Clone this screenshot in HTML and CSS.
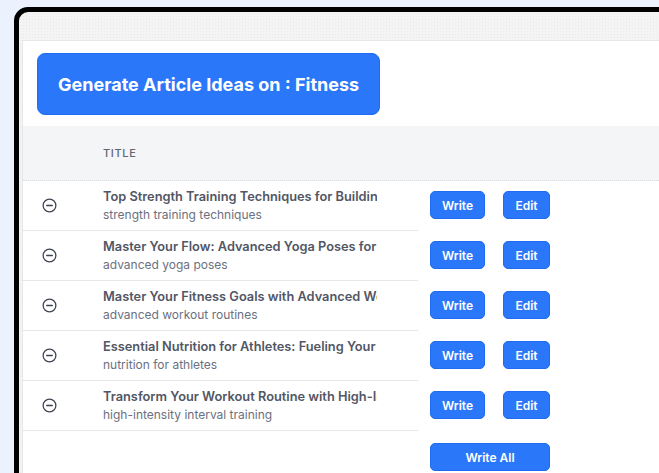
FILE: index.html
```html
<!DOCTYPE html>
<html>
<head>
<meta charset="utf-8">
<link rel="stylesheet" href="styles.css">
</head>
<body>
<div class="frame">
  <div class="panel">
    <div class="top">
      <button class="gen">Generate Article Ideas on : Fitness</button>
    </div>
    <div class="thead">
      <div class="c-icon"></div>
      <div class="c-title head">TITLE</div>
    </div>
    <div class="row">
      <div class="cells">
        <div class="c-icon"><svg class="ico" viewBox="0 0 24 24"><circle cx="12" cy="12" r="9"/><path d="M8 12h8"/></svg></div>
        <div class="c-title"><div class="t">Top Strength Training Techniques for Building Muscle</div><div class="s">strength training techniques</div></div>
      </div>
      <div class="actions"><button class="btn w">Write</button><button class="btn e">Edit</button></div>
    </div>
    <div class="row">
      <div class="cells">
        <div class="c-icon"><svg class="ico" viewBox="0 0 24 24"><circle cx="12" cy="12" r="9"/><path d="M8 12h8"/></svg></div>
        <div class="c-title"><div class="t">Master Your Flow: Advanced Yoga Poses for Flexibility</div><div class="s">advanced yoga poses</div></div>
      </div>
      <div class="actions"><button class="btn w">Write</button><button class="btn e">Edit</button></div>
    </div>
    <div class="row">
      <div class="cells">
        <div class="c-icon"><svg class="ico" viewBox="0 0 24 24"><circle cx="12" cy="12" r="9"/><path d="M8 12h8"/></svg></div>
        <div class="c-title"><div class="t">Master Your Fitness Goals with Advanced Workout Routines</div><div class="s">advanced workout routines</div></div>
      </div>
      <div class="actions"><button class="btn w">Write</button><button class="btn e">Edit</button></div>
    </div>
    <div class="row">
      <div class="cells">
        <div class="c-icon"><svg class="ico" viewBox="0 0 24 24"><circle cx="12" cy="12" r="9"/><path d="M8 12h8"/></svg></div>
        <div class="c-title"><div class="t">Essential Nutrition for Athletes: Fueling Your Performance</div><div class="s">nutrition for athletes</div></div>
      </div>
      <div class="actions"><button class="btn w">Write</button><button class="btn e">Edit</button></div>
    </div>
    <div class="row">
      <div class="cells">
        <div class="c-icon"><svg class="ico" viewBox="0 0 24 24"><circle cx="12" cy="12" r="9"/><path d="M8 12h8"/></svg></div>
        <div class="c-title"><div class="t">Transform Your Workout Routine with High-Intensity Interval Training</div><div class="s">high-intensity interval training</div></div>
      </div>
      <div class="actions"><button class="btn w">Write</button><button class="btn e">Edit</button></div>
    </div>
    <div class="foot">
      <div class="spacer"></div>
      <div class="actions"><button class="btn all">Write All</button></div>
    </div>
  </div>
</div>
</body>
</html>
```
FILE: styles.css
```css
html, body {
  margin: 0;
  padding: 0;
}
body {
  background: #ebf1fd;
  height: 473px;
  overflow: hidden;
  font-family: Inter, "Liberation Sans", sans-serif;
}
.frame {
  margin: 7px 0 0 14px;
  width: 720px;
  height: 560px;
  box-sizing: border-box;
  border: 5px solid #000;
  border-radius: 14px 14px 0 0;
  background-color: #f4f4f5;
  background-image: radial-gradient(#e9e9eb 0.6px, transparent 0.7px);
  background-size: 3px 3px;
  padding: 28px 0 0 3px;
}
.panel {
  background: #fff;
  border-top: 1px solid #e6e7ea;
  border-left: 1px solid #e6e7ea;
  height: 100%;
}
.top {
  padding: 12px 0 11px 14px;
}
.gen {
  display: block;
  height: 62px;
  padding: 0 20px;
  border: 1px solid #1f6cf0;
  border-radius: 8px;
  background: #2b77fa;
  color: #fff;
  font-family: Inter, "Liberation Sans", sans-serif;
  font-size: 18px;
  font-weight: 700;
}
.thead {
  display: flex;
  align-items: center;
  height: 54px;
  background: #f4f5f7;
  border-bottom: 1px dotted #d9dce1;
}
.c-icon {
  width: 80px;
  flex: none;
  display: flex;
  align-items: center;
  padding-left: 18px;
  box-sizing: border-box;
}
.c-title {
  width: 274px;
  overflow: hidden;
  white-space: nowrap;
}
.head {
  font-size: 11px;
  font-weight: 500;
  letter-spacing: 0.06em;
  color: #5f6572;
}
.row {
  display: flex;
}
.cells {
  display: flex;
  align-items: center;
  width: 395px;
  height: 49px;
  border-bottom: 1px solid #e5e7eb;
  flex: none;
}
.ico {
  width: 17px;
  height: 17px;
  fill: none;
  stroke: #3f4451;
  stroke-width: 1.8;
  stroke-linecap: round;
}
.t {
  font-size: 12.8px;
  font-weight: 600;
  color: #525665;
  line-height: 18px;
}
.s {
  font-size: 12px;
  color: #6b7080;
  line-height: 18px;
}
.actions {
  display: flex;
  align-items: center;
  gap: 18px;
  padding: 0 0 2px 12px;
}
.btn {
  height: 28px;
  border: 1px solid #1f6cf0;
  border-radius: 5px;
  background: #2b77fa;
  color: #fff;
  font-family: Inter, "Liberation Sans", sans-serif;
  font-size: 12px;
  font-weight: 600;
  padding: 0;
}
.w { width: 55px; }
.e { width: 47px; }
.all { width: 120px; }
.foot {
  display: flex;
  padding-top: 12px;
}
.foot .actions {
  padding-bottom: 0;
}
.spacer {
  width: 395px;
  flex: none;
}
```
